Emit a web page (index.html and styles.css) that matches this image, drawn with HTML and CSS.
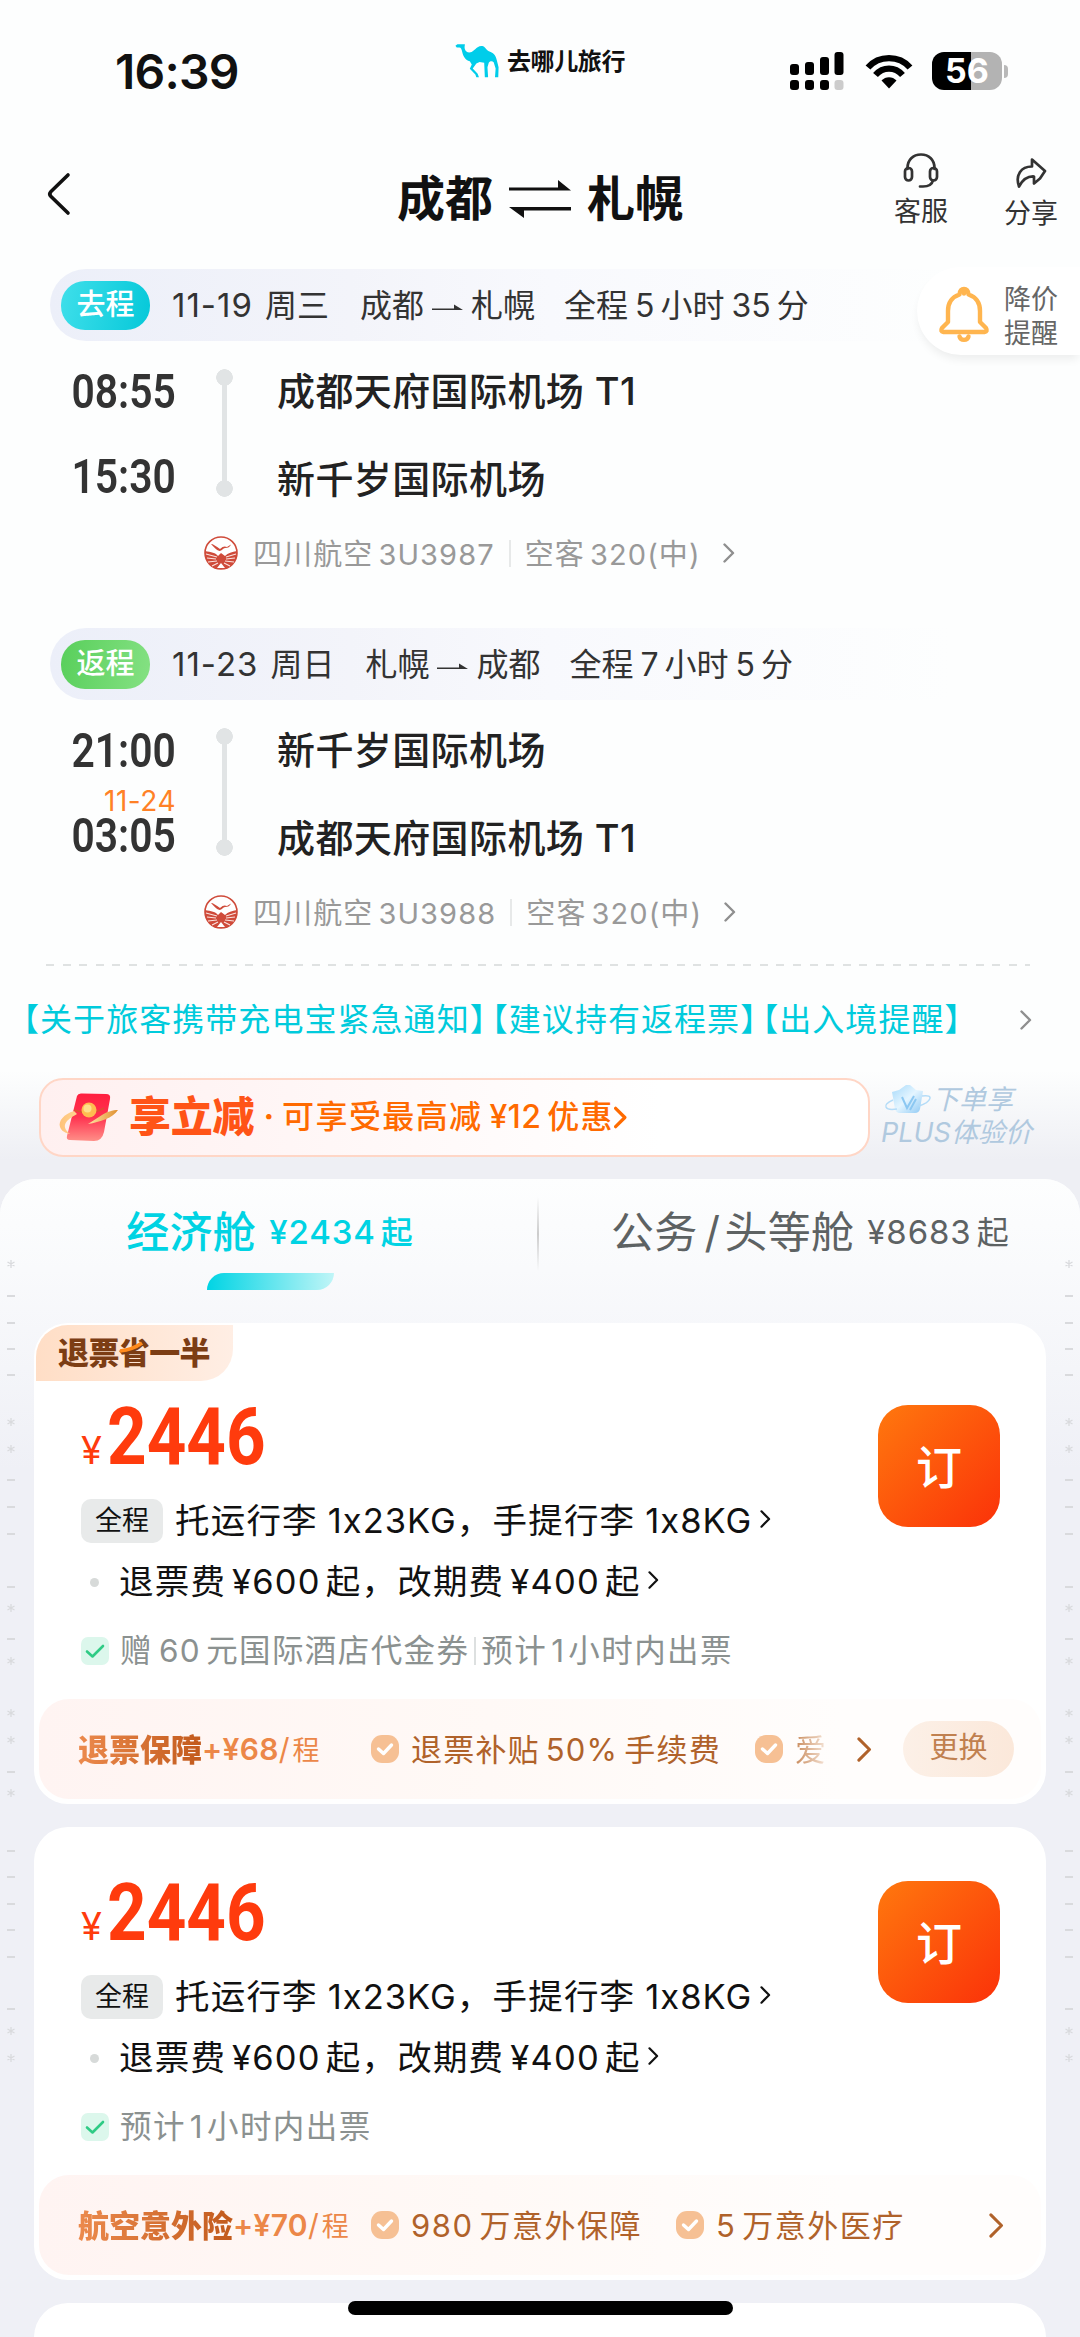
FILE: index.html
```html
<!DOCTYPE html>
<html lang="zh-CN">
<head>
<meta charset="utf-8">
<title>成都 ⇌ 札幌</title>
<link rel="stylesheet" href="styles.css">
</head>
<body>
<svg width="0" height="0" class="defs">
  <defs>
    <linearGradient id="envelope" x1="0" y1="0" x2="0" y2="1"><stop offset="0" stop-color="#ff1f3f"/><stop offset=".5" stop-color="#ff3350"/><stop offset="1" stop-color="#ff8f88"/></linearGradient>
    <linearGradient id="ring" x1="0" y1="0" x2="1" y2="0"><stop offset="0" stop-color="#ffc27a"/><stop offset=".5" stop-color="#ffe2a0"/><stop offset="1" stop-color="#e09030"/></linearGradient>
    <linearGradient id="ice" x1="0" y1="0" x2="1" y2="1"><stop offset="0" stop-color="#a5d9fa"/><stop offset=".5" stop-color="#e4f5ff"/><stop offset="1" stop-color="#8cc8f4"/></linearGradient>
  </defs>
  <symbol id="chev" viewBox="0 0 12 20"><path d="M1.5 1.5 10 10 1.5 18.5" fill="none" stroke="currentColor" stroke-width="2.4" stroke-linecap="round" stroke-linejoin="round"/></symbol>
  <symbol id="chev-bold" viewBox="0 0 12 20"><path d="M1.5 1.5 10 10 1.5 18.5" fill="none" stroke="currentColor" stroke-width="3" stroke-linecap="round" stroke-linejoin="round"/></symbol>
  <symbol id="arrow" viewBox="0 0 32 8"><path d="M0 6H31L22 .5V4.6H0Z" fill="currentColor"/></symbol>
  <symbol id="badge" viewBox="0 0 28 28"><rect width="28" height="28" rx="11" fill="#f6c094"/><path d="M7.500 14 12.500 18.500 20.500 10" fill="none" stroke="#fff" stroke-width="3.400" stroke-linecap="round" stroke-linejoin="round"/></symbol>
  <symbol id="tick" viewBox="0 0 28 28"><rect width="28" height="28" rx="7" fill="#dcf7ec"/><path d="M6 14.500 11.500 19.500 22 9" fill="none" stroke="#2fcb85" stroke-width="2.600" stroke-linecap="round" stroke-linejoin="round"/></symbol>
  <symbol id="airline" viewBox="0 0 34 34">
    <circle cx="17" cy="17" r="16" fill="#fff" stroke="#cf4b3a" stroke-width="1.600"/>
    <path d="M1 15C7 16 12 17 14 20L17 17 21 20C24 17 28 16 33 15 34 25 27 33 17 33S0 25 1 15Z" fill="#cf4b3a"/>
    <path d="M7 8C9 8 12 10 16 13 19 10 21 10 23 11L27 8.500C26 11 24 12 21 12 19 12 18 15 15.500 15 12 14 10 11 7 8Z" fill="#cf4b3a"/>
    <path d="M2 18 13 21M3 22 12 23M4 26 13 25M8 30 14 27M32 18 22 21M31 22 22 23M30 26 21 25M26 30 20 27" stroke="#fbe3df" stroke-width="1.100"/>
    <path d="M13 32 17 27 21 32Z" fill="#fff"/>
  </symbol>
  <symbol id="marks" viewBox="0 0 10 820">
    <path stroke="#d9dadd" stroke-width="1.800" d="M1 46h8M1 73h8M1 99h8M1 125h8M1 230h8M1 257h8M1 284h8M1 337h8M1 389h8M1 522h8M1 601h8M1 627h8M1 654h8M1 680h8M1 707h8M1 759h8"/>
    <path stroke="#d9dadd" stroke-width="1.300" d="M5 10v8M1.500 12l7 4M8.500 12l-7 4M5 168v8M1.500 170l7 4M8.500 170l-7 4M5 195v8M1.500 197l7 4M8.500 197l-7 4M5 354v8M1.500 356l7 4M8.500 356l-7 4M5 407v8M1.500 409l7 4M8.500 409l-7 4M5 459v8M1.500 461l7 4M8.500 461l-7 4M5 486v8M1.500 488l7 4M8.500 488l-7 4M5 539v8M1.500 541l7 4M8.500 541l-7 4M5 777v8M1.500 779l7 4M8.500 779l-7 4M5 804v8M1.500 806l7 4M8.500 806l-7 4"/>
  </symbol>
</svg>

<header class="status">
  <span class="clock">16:39</span>
  <div class="brand">
    <svg class="camel" viewBox="15 41 134 104"><path fill="#00cdea" d="M16 46 22 42H45L44 50C44 58 48 66 58 67 70 67 74 57 84 51 92 46 100 46 106 52 111 58 114 62 122 65 136 70 140 80 143 92L148 112 147 143H137L139 116 133 97C128 92 122 94 118 98L114 112 116 143H106L104 98 90 96 80 101 69 116 84 132 88 143H80L77 134 60 117 66 104 60 94C46 90 40 78 37 66 35 58 33 52 28 52H20Z"/></svg>
    <span>去哪儿旅行</span>
  </div>
  <div class="system">
    <svg width="54" height="38" viewBox="0 0 54 38"><g fill="#000"><rect y="12" width="9" height="11" rx="3"/><rect x="15" y="10" width="9" height="13" rx="3"/><rect x="30" y="5" width="9" height="18" rx="3"/><rect x="44.500" width="9" height="23" rx="3"/><rect y="28" width="9" height="10" rx="3"/><rect x="15" y="28" width="9" height="10" rx="3"/><rect x="30" y="28" width="9" height="10" rx="3"/></g><rect x="44.500" y="28" width="9" height="10" rx="3" fill="#ccc"/></svg>
    <svg class="wifi" width="48" height="36" viewBox="0 0 48 36"><g fill="none" stroke="#000" stroke-width="6.400"><path d="M3 14.500C14 2 34 2 45 14.500"/><path d="M10.500 22C18 13.500 30 13.500 37.500 22"/></g><path d="M16.500 27.500C20.500 23 27.500 23 31.500 27.500L24 35.500Z" fill="#000"/></svg>
    <span class="battery">56</span><i class="cap"></i>
  </div>
</header>

<nav class="nav">
  <svg class="back" width="24" height="42" viewBox="0 0 24 42"><path d="M21 2 4 18.500Q1.500 21 4 23.500L21 40" fill="none" stroke="#111" stroke-width="3.600" stroke-linecap="round"/></svg>
  <h1><span>成都</span><svg width="62" height="38" viewBox="0 0 62 38"><path fill="#111" d="M0 7.500H49V0L62 10.500H0ZM62 27V30.500H15V38L0 27Z"/></svg><span>札幌</span></h1>
  <div class="action service">
    <svg width="36" height="36" viewBox="0 0 36 36"><g fill="none" stroke="#333" stroke-width="2.700" stroke-linecap="round"><path d="M4.500 16V15C4.500 7 10 1.500 18 1.500S31.500 7 31.500 15V16"/><rect x="2" y="15" width="7" height="12.500" rx="3.500"/><rect x="27" y="15" width="7" height="12.500" rx="3.500"/><path d="M30 27.500C29 31.500 25 33.500 20 33.500H17"/></g></svg>
    <span>客服</span>
  </div>
  <div class="action share">
    <svg width="32" height="30" viewBox="0 0 32 30"><path d="M17 1.500 30 13 25 20.500 19 25.500V18.500C11 18 7 23 4 28.500 0 17 6 8.500 17 8.500Z" fill="none" stroke="#333" stroke-width="2.700" stroke-linejoin="round"/></svg>
    <span>分享</span>
  </div>
</nav>

<main>
  <section class="leg">
    <div class="legbar">
      <b class="pill out">去程</b><span class="date">11-19</span><span class="wd">周三</span>
      <span class="route">成都<svg width="32" height="8"><use href="#arrow"/></svg>札幌</span>
      <span class="dur">全程<i>5</i>小时<i>35</i>分</span>
    </div>
    <div class="legbody">
      <div class="times"><time>08:55</time><time class="second">15:30</time></div>
      <div class="track"></div>
      <div class="ports"><span>成都天府国际机场 T1</span><span>新千岁国际机场</span></div>
    </div>
    <div class="detail"><svg class="al"><use href="#airline"/></svg><span class="fl">四川航空<i>3U3987</i></span><em></em><span>空客<i>320(</i>中<i class="par">)</i></span><svg class="cv"><use href="#chev"/></svg></div>
    <aside class="alert">
      <svg width="50" height="56" viewBox="0 0 50 56"><g fill="none" stroke="#ffb54f" stroke-width="4.400" stroke-linejoin="round" stroke-linecap="round"><path d="M20.500 8.500C20.500 1 29.500 1 29.500 8.500 37 11 41 16.500 41 25V36L47 42Q49 45.500 45.500 46H4.500Q1 45.500 3 42L9 36V25C9 16.500 13 11 20.500 8.500ZM25 6.500v1"/><path d="M20.500 50.500C21.500 55 28.500 55 29.500 50.500"/></g></svg>
      <span>降价<br>提醒</span>
    </aside>
  </section>

  <section class="leg">
    <div class="legbar">
      <b class="pill back-way">返程</b><span class="date">11-23</span><span class="wd">周日</span>
      <span class="route">札幌<svg width="32" height="8"><use href="#arrow"/></svg>成都</span>
      <span class="dur">全程<i>7</i>小时<i>5</i>分</span>
    </div>
    <div class="legbody">
      <div class="times"><time>21:00</time><small>11-24</small><time>03:05</time></div>
      <div class="track"></div>
      <div class="ports"><span>新千岁国际机场</span><span>成都天府国际机场 T1</span></div>
    </div>
    <div class="detail"><svg class="al"><use href="#airline"/></svg><span class="fl">四川航空<i>3U3988</i></span><em></em><span>空客<i>320(</i>中<i class="par">)</i></span><svg class="cv"><use href="#chev"/></svg></div>
  </section>

  <div class="dashline"></div>
  <div class="notice"><p><span>【关于旅客携带充电宝紧急通知】</span><span>【建议持有返程票】</span><span>【出入境提醒】</span></p><svg class="cv"><use href="#chev"/></svg></div>

  <section class="promo">
    <div class="promobox">
      <svg width="64" height="50" viewBox="0 0 64 50"><path d="M19 4Q20 1 24 1.500L48 2Q53 2 52 7L46 40Q44 49 36 49L12 48Q8 48 9 44Z" fill="url(#envelope)"/><path d="M16 19C6 22 0 29 2 35 4 41 12 42 12 42 2 34 8 28 19 22ZM30 32C42 30 55 26 60 18 55 18 48 20 44 23Z" fill="url(#ring)"/><path d="M16 18Q34 24 46 16" fill="none" stroke="#d85430" stroke-width="1.500"/><circle cx="31" cy="18" r="7.500" fill="#ffbd50"/><circle cx="29.500" cy="16.500" r="4" fill="#ffe08c"/></svg>
      <strong>享立减</strong><b>·</b><span>可享受最高减<i>¥12</i>优惠</span><svg class="pcv"><use href="#chev-bold"/></svg>
    </div>
    <div class="plus">
      <div><svg width="46" height="30" viewBox="0 0 46 30"><path d="M7 8 14 6 21 1H25L31 6 38 7 35 25Q34 29 30 29H15Q11 29 10 25Z" fill="url(#ice)"/><path d="M17 13 22 24 29 12M25 26 31 15" fill="none" stroke="#8cc8f2" stroke-width="2"/><path d="M8 16C-4 21 0 27 12 25M37 12C50 10 46 18 34 22" fill="none" stroke="#b4dcf8" stroke-width="1.400"/></svg><span>下单享</span></div>
      <p>PLUS体验价</p>
    </div>
  </section>

  <section class="sheet">
    <svg class="edge left"><use href="#marks"/></svg>
    <svg class="edge right"><use href="#marks"/></svg>
    <div class="tabs">
      <div class="tab active"><div><strong>经济舱</strong><span>¥2434<i>起</i></span></div></div>
      <div class="tab"><div><strong>公务<i>/</i>头等舱</strong><span>¥8683<i>起</i></span></div></div>
    </div>

    <article class="card">
      <div class="tag">退票<span>省<svg width="24" height="10" viewBox="0 0 24 10"><path d="M0 9C9 8 15 6 22 1" fill="none" stroke="#ff8a1c" stroke-width="3.500"/></svg></span>一半</div>
      <div class="offer">
        <div class="info">
          <div class="price"><small>¥</small><b>2446</b></div>
          <div class="row"><span class="label">全程</span><span class="l1">托运行李<i>1x23KG</i>，手提行李<i>1x8KG</i></span><svg class="rcv"><use href="#chev"/></svg></div>
          <div class="row r2"><i class="bullet"></i><span>退票费<i>¥600</i>起，改期费<i>¥400</i>起</span><svg class="rcv"><use href="#chev"/></svg></div>
          <div class="row r3"><svg class="tick"><use href="#tick"/></svg><span>赠<i>60</i>元国际酒店代金券</span><em></em><span>预计<i class="one">1</i>小时内出票</span></div>
        </div>
        <button>订</button>
      </div>
      <div class="banner">
        <strong>退票保障</strong><span class="fee"><b>+¥68</b>/<small>程</small></span>
        <div class="benefits b1"><svg class="bd"><use href="#badge"/></svg><span>退票补贴<i>50%</i>手续费</span><svg class="bd"><use href="#badge"/></svg><span class="fade">爱</span></div>
        <svg class="bcv"><use href="#chev"/></svg><span class="swap">更换</span>
      </div>
    </article>

    <article class="card two">
      <div class="offer">
        <div class="info">
          <div class="price"><small>¥</small><b>2446</b></div>
          <div class="row"><span class="label">全程</span><span class="l1">托运行李<i>1x23KG</i>，手提行李<i>1x8KG</i></span><svg class="rcv"><use href="#chev"/></svg></div>
          <div class="row r2"><i class="bullet"></i><span>退票费<i>¥600</i>起，改期费<i>¥400</i>起</span><svg class="rcv"><use href="#chev"/></svg></div>
          <div class="row r3"><svg class="tick"><use href="#tick"/></svg><span>预计<i class="one">1</i>小时内出票</span></div>
        </div>
        <button>订</button>
      </div>
      <div class="banner">
        <strong>航空意外险</strong><span class="fee"><b>+¥70</b>/<small>程</small></span>
        <div class="benefits b2"><svg class="bd"><use href="#badge"/></svg><span><i class="lead">980</i>万意外保障</span><svg class="bd"><use href="#badge"/></svg><span><i class="lead">5</i>万意外医疗</span></div>
        <svg class="bcv end"><use href="#chev"/></svg>
      </div>
    </article>

    <article class="card three"></article>
  </section>
</main>
<div class="home"></div>
</body>
</html>
```
FILE: styles.css
```css
* { box-sizing: border-box; margin: 0; padding: 0; }
body {
  width: 1080px; height: 2337px; overflow: hidden; position: relative;
  display: flex; flex-direction: column;
  background: #fdfefe; color: #111;
  font-family: Inter, "Noto Sans CJK SC", sans-serif;
  line-height: 1; white-space: nowrap;
}
i { font-style: normal; }
svg { display: block; flex: none; overflow: visible; }
.defs { position: absolute; }
span, strong, b, time { flex: none; }

/* status bar */
.status { height: 120px; flex: none; display: flex; align-items: flex-start; }
.clock { margin: 48px 0 0 115px; width: 340px; font-size: 48px; font-weight: 600; letter-spacing: -.8px; }
.brand { display: flex; gap: 8px; padding-top: 44px; width: 335px; }
.camel { width: 44px; height: 34px; }
.brand span { font-size: 24px; line-height: 35px; font-weight: 700; letter-spacing: -.4px; }
.system { display: flex; align-items: center; height: 38px; margin-top: 52px; }
.wifi { margin: 0 19px 0 21px; }
.battery {
  width: 70px; height: 38px; border-radius: 12px; color: #fff; text-align: center;
  background: linear-gradient(90deg, #000 39px, #b3b3b3 39px);
  font-size: 34px; line-height: 38px; font-weight: 700;
}
.cap { width: 4px; height: 13px; margin-left: 2px; border-radius: 0 4px 4px 0; background: #b9b9b9; }

/* navigation */
.nav { height: 149px; flex: none; display: flex; align-items: flex-start; }
.back { margin: 53px 0 0 47px; }
.nav h1 { display: flex; align-items: center; gap: 16px; height: 60px; margin: 49px 0 0 326px; width: 497px; font-size: 48px; font-weight: 700; }
.action { display: flex; flex-direction: column; align-items: center; gap: 9px; width: 54px; font-size: 27px; color: #333; }
.service { margin: 33px 0 0 0; }
.share { margin: 38px 0 0 56px; gap: 12px; }

/* flight legs */
.leg { position: relative; height: 359px; }
.legbar {
  height: 72px; margin-left: 50px; padding: 1px 0 0 11px; border-radius: 36px 0 0 36px;
  display: flex; align-items: center; color: #333; font-size: 32px;
  background: linear-gradient(90deg, #eceff9 0, #f3f4fa 300px, #f8f9fd 500px, #fdfefe 900px);
}
.pill { width: 89px; height: 49px; border-radius: 24px; color: #fff; font-size: 29px; line-height: 48px; font-weight: 500; text-align: center; }
.out { background: linear-gradient(100deg, #3fdfea, #05c8d9); }
.back-way { background: linear-gradient(100deg, #58cf5b, #85e183); }
.date { margin: 0 12px 0 22px; font-size: 33px; letter-spacing: 1px; }
.wd { width: 95px; }
.route { display: flex; align-items: center; margin-right: 29px; }
.route svg { margin: 4px 7px 0 8px; }
.dur i { margin: 0 6px 0 7px; }
.legbody { display: flex; height: 192px; }
.times { width: 176px; padding-top: 33px; display: flex; flex-direction: column; align-items: flex-end; color: #333; }
.times time { font: 600 48px/36px Roboto, sans-serif; transform: scaleX(.85); transform-origin: right; }
.times .second { margin-top: 49px; }
.times small { font-size: 28px; line-height: 22px; letter-spacing: .5px; margin: 21px 0 6px; color: #ff8126; }
.track {
  width: 17px; height: 128px; margin: 28px 53px 0 40px;
  background: radial-gradient(circle at 50% 8.500px, #e1e4e5 8px, transparent 8.600px),
    radial-gradient(circle at 50% 119.500px, #e1e4e5 8px, transparent 8.600px),
    linear-gradient(#e1e4e5, #e1e4e5) 50% 50% / 5px 112px no-repeat;
}
.ports { padding-top: 25px; margin-left: -9px; display: flex; flex-direction: column; gap: 38px; font-size: 38px; line-height: 50px; font-weight: 500; letter-spacing: .4px; color: #222; }
.detail { display: flex; align-items: center; height: 40px; padding-left: 204px; font-size: 29px; letter-spacing: 1.100px; color: #999; }
.al { width: 34px; height: 34px; margin-right: 15px; }
.detail span { padding-top: 2px; }
.detail i { margin-left: 5px; }
.detail i.par { margin-left: 0; }
.detail em { width: 2px; height: 27px; margin: 0 14px; background: #e7e9e9; }
.cv { width: 12px; height: 20px; color: #8f8f8f; }
.detail .cv { margin-left: 22px; }
.alert {
  position: absolute; right: 0; top: -2px; width: 163px; height: 88px; padding: 6px 0 0 22px;
  display: flex; align-items: center; gap: 15px; border-radius: 44px 0 0 44px; background: #fff;
  box-shadow: 0 6px 10px -2px rgba(0,0,0,.07); font-size: 27px; line-height: 34px; color: #666;
}
.alert span { padding-top: 6px; }

/* notice */
.dashline { height: 2px; margin: -23.500px 50px 0 46px; background: repeating-linear-gradient(90deg, #dfe2e2 0 8px, transparent 8px 16.600px); }
.notice { height: 104px; display: flex; align-items: center; padding-top: 4px; color: #00cbdc; font-size: 32px; }
.notice p { width: 1012px; padding-left: 23px; display: flex; gap: 5px; letter-spacing: 1.050px; font-feature-settings: "halt"; }
.notice .cv { margin-left: 8px; }

/* promotion */
.promo { display: flex; height: 109.500px; padding: 8px 0 0 39px; background: linear-gradient(#fdfefe, #eeeff4 90px); }
.promobox { width: 831px; height: 79px; padding-left: 17px; display: flex; align-items: center; border: 2px solid #ffd6c6; border-radius: 24px; background: linear-gradient(90deg, #fff0f0, #fff 75%); color: #ff6a00; }
.promobox strong { margin-left: 7px; font-size: 42px; font-weight: 900; letter-spacing: -.2px; color: #ff5417; }
.promobox b { margin: 0 8px 0 9px; font-size: 32px; }
.promobox span { font-size: 32px; letter-spacing: 1.400px; font-weight: 500; }
.promobox span i { margin: 0 6px 0 7px; letter-spacing: .3px; }
.pcv { width: 13px; height: 25px; }
.plus { padding: 5px 0 0 11px; color: #b0c9df; font-size: 27px; font-style: italic; }
.plus div { display: flex; align-items: center; height: 33px; gap: 1px; padding-left: 4px; }
.plus p { line-height: 34px; }

/* cabin sheet */
.sheet { position: relative; height: 1159px; border-radius: 36px 36px 0 0; background: linear-gradient(#fdfefe 0, #f9fafc 90px, #eff0f6 290px); }
.promo + .sheet { box-shadow: 0 -40px 0 40px #eeeff4; clip-path: inset(0); }
.edge { position: absolute; top: 71px; width: 10px; height: 820px; }
.left { left: 6px; }
.right { right: 6px; }
.tabs { display: flex; height: 144px; }
.tab { width: 50%; height: 111px; position: relative; display: flex; justify-content: center; color: #5d6263; }
.tab > div { display: flex; align-items: center; height: 107px; gap: 13px; }
.tab strong { font-size: 43px; font-weight: 400; letter-spacing: .3px; }
.tab strong i { margin: 0 4px 0 7px; }
.tab span { font-size: 33px; letter-spacing: .9px; }
.tab span i { margin-left: 5px; font-size: 32px; }
.tab + .tab { justify-content: flex-start; padding-left: 71px; }
.tab + .tab::before { content: ""; position: absolute; left: -3px; top: 18px; width: 2px; height: 74px; background: linear-gradient(transparent, #ccc, transparent); }
.active { color: #00d3e3; }
.active strong, .active span { font-weight: 500; }
.active::after { content: ""; position: absolute; left: 207px; top: 94px; width: 127px; height: 17px; border-radius: 17px 0 17px 0; background: linear-gradient(90deg, #00d4e4, #c0f5f7); }

/* offer cards */
.card { position: relative; width: 1012px; height: 481px; margin: 0 auto 23px; padding: 85px 5px 5px; border-radius: 34px; background: #fff; }
.card.two { height: 453px; padding-top: 57px; }
.tag { position: absolute; left: 2px; top: 2px; width: 197px; height: 56px; padding-left: 22px; border-radius: 32px 0 32px 0; background: linear-gradient(90deg, #ffdec6, #ffeee4); font-size: 31px; line-height: 55px; font-weight: 800; letter-spacing: -.6px; color: #7c3d14; }
.tag span { position: relative; display: inline-block; }
.tag svg { position: absolute; left: 1px; top: 17px; }
.offer { display: flex; justify-content: space-between; height: 291px; padding: 0 41px 0 42px; }
.offer button { width: 122px; height: 122px; margin-top: -3px; padding-bottom: 4px; border: 0; border-radius: 30px; background: linear-gradient(135deg, #ff780e, #fb3209); color: #fff; font: 500 46px/1 "Noto Sans CJK SC", sans-serif; }
.price { display: flex; align-items: baseline; height: 91px; padding-top: 1px; color: #ff3b0d; }
.price small { font-size: 38px; width: 26px; }
.price b { font: bold 79px/57px Roboto, sans-serif; transform: scaleX(.875); transform-origin: left; }
.row { display: flex; align-items: center; height: 44px; font-size: 34.500px; letter-spacing: 1.200px; }
.label { width: 82px; height: 44px; margin-right: 12px; border-radius: 10px; background: #e8eaea; font-size: 27px; line-height: 43px; letter-spacing: 0; text-align: center; }
.row span > i { margin: 0 5px 0 6px; }
.row .l1 i { margin: 0 0 0 10px; letter-spacing: 1px; }
.rcv { width: 11px; height: 18px; margin: -4px 0 0 8px; }
.r2 { margin-top: 17px; }
.r2 .rcv { margin-left: 7px; }
.bullet { width: 9px; height: 9px; margin: 0 20px 0 9px; border-radius: 50%; background: #d7dad9; }
.r3 { margin-top: 25px; font-size: 31.500px; letter-spacing: 1.400px; color: #8b9190; }
.r3 .one { margin: 0 3px 0 4px; }
.tick { width: 28px; height: 28px; margin-right: 11px; }
.row em { width: 2px; height: 28px; margin: 0 5px; background: #dde0e0; }
.banner { height: 100px; padding-left: 39px; display: flex; align-items: center; border-radius: 30px; background: linear-gradient(90deg, #fff4f2, #fff9f6 45%, #fffdfc 80%); color: #b0622a; font-size: 31px; }
.banner strong { font-weight: 900; background: linear-gradient(90deg, #ec8a4d, #c25a1c); background-clip: text; -webkit-background-clip: text; color: transparent; }
.fee { color: #ec8748; font-size: 30px; }
.fee b { font-weight: 600; letter-spacing: .3px; }
.fee small { font-size: 27px; margin-left: 3px; }
.benefits { position: absolute; left: 337px; display: flex; align-items: center; letter-spacing: 1.200px; }
.bd { width: 28px; height: 28px; margin-right: 12px; }
.b1 .bd:nth-of-type(2) { margin-left: 34px; }
.b2 { letter-spacing: 1.500px; }
.b2 .bd:nth-of-type(2) { margin-left: 34px; }
.benefits i { margin: 0 6px; }
.benefits .lead { margin-left: 0; }
.fade { background: linear-gradient(90deg, #c98b5c, #f6e6da); background-clip: text; -webkit-background-clip: text; color: transparent; }
.bcv { position: absolute; left: 823px; width: 15px; height: 25px; }
.bcv.end { left: 955px; }
.swap { position: absolute; left: 869px; width: 111px; height: 56px; border-radius: 28px; background: linear-gradient(90deg, #fcf0e7, #fbe8da); color: #c0804f; font-size: 29px; line-height: 54px; text-align: center; }
.card.three { height: 80px; margin-bottom: 0; }
.home { position: absolute; left: 348px; top: 2301px; width: 385px; height: 14px; border-radius: 7px; background: #000; }
```
